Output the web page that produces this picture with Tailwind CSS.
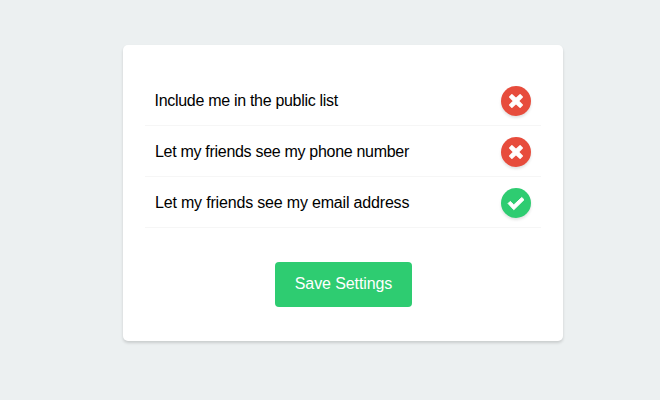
<!DOCTYPE html>
<html lang="en">
<head>
<meta charset="utf-8">
<title>Settings</title>
<script src="https://cdn.jsdelivr.net/npm/@tailwindcss/browser@4"></script>
</head>
<body class="h-[400px] overflow-hidden bg-[#ecf0f1] pt-[45px] pl-[123px] font-['Liberation_Sans',Arial,sans-serif] text-base text-black">
<form class="flex h-[296px] w-[440px] flex-col items-center rounded-[5px] bg-white pt-[30px] shadow-[0_2px_3px_rgba(0,0,0,0.15)]">
<ul class="w-[396px]">
<li class="flex h-[51px] items-center justify-between border-b border-[#f6f6f6] px-2.5 pt-px"><span class="-ml-[0.5px] tracking-[-0.3px]">Include me in the public list</span>
<span class="size-[30px] rounded-full bg-[#e74c3c] shadow-[0_2px_3px_rgba(0,0,0,0.12)]"><svg class="size-[30px]" viewBox="-15 -15 30 30"><path d="M-6.3-4.1-4.1-6.3 0-2.4 4.1-6.3 6.3-4.1 2.4 0 6.3 4.1 4.1 6.3 0 2.4-4.1 6.3-6.3 4.1-2.4 0Z" fill="#fff" stroke="#fff" stroke-width="1.4" stroke-linejoin="round"/></svg></span></li>
<li class="flex h-[51px] items-center justify-between border-b border-[#f6f6f6] px-2.5 pt-px"><span class="tracking-[-0.3px]">Let my friends see my phone number</span>
<span class="size-[30px] rounded-full bg-[#e74c3c] shadow-[0_2px_3px_rgba(0,0,0,0.12)]"><svg class="size-[30px]" viewBox="-15 -15 30 30"><path d="M-6.3-4.1-4.1-6.3 0-2.4 4.1-6.3 6.3-4.1 2.4 0 6.3 4.1 4.1 6.3 0 2.4-4.1 6.3-6.3 4.1-2.4 0Z" fill="#fff" stroke="#fff" stroke-width="1.4" stroke-linejoin="round"/></svg></span></li>
<li class="flex h-[51px] items-center justify-between border-b border-[#f6f6f6] px-2.5 pt-px"><span class="tracking-[-0.18px]">Let my friends see my email address</span>
<span class="size-[30px] rounded-full bg-[#2ecc71] shadow-[0_2px_3px_rgba(0,0,0,0.12)]"><svg class="size-[30px]" viewBox="0 0 30 30"><path d="M7.1 15.5 9.2 13.4 12.8 16.9 20.8 9.5 23 11.7 12.8 21.7Z" fill="#fff" stroke="#fff" stroke-width="1" stroke-linejoin="round"/></svg></span></li>
</ul>
<button type="button" class="mt-[34px] h-[45px] w-[137px] rounded bg-[#2ecc71] pb-0.5 pl-px tracking-[-0.1px] text-white">Save Settings</button>
</form>
</body>
</html>
